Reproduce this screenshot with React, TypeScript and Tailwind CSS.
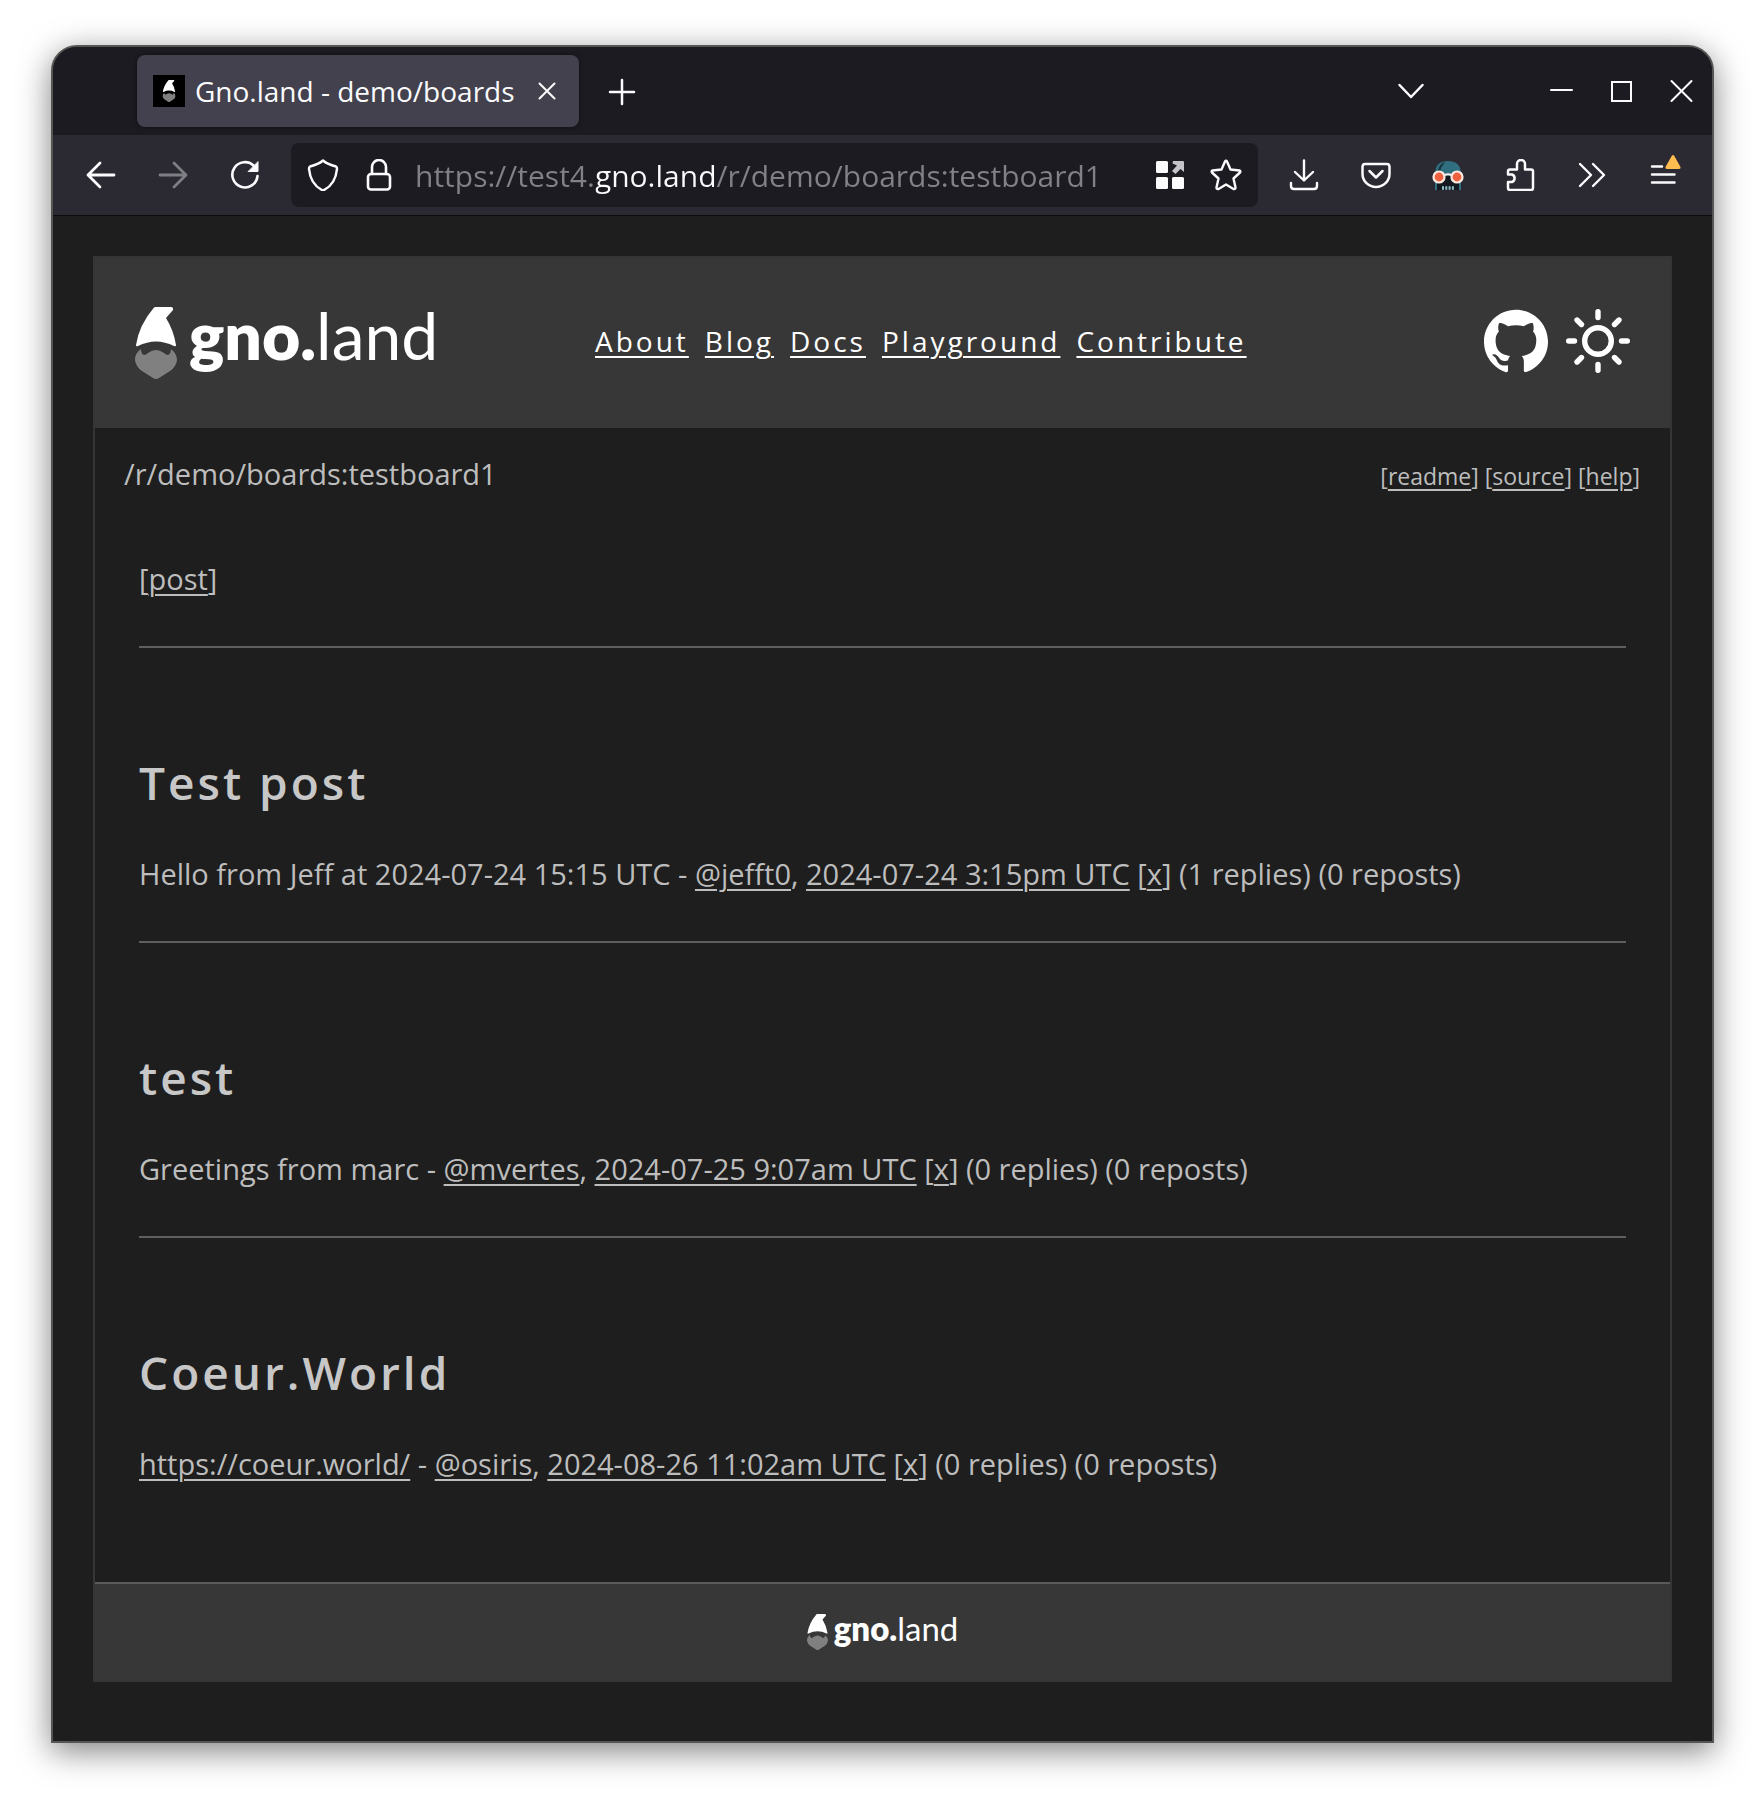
import React from "react";

type P = { className?: string };

const Gnome = ({ className = "" }: P) => (
  <svg viewBox="0 0 42 72" className={className} aria-hidden="true">
    <path d="M19 0.5Q19.5 0 20.500 0H36Q38.500 0 38 3L31 11Q38.500 23 41 38Q41 40 39 39Q21 30 3 39Q1 40 1 38Q4 18 19 0.500Z" fill="#fff" />
    <path d="M6 42C6 47 9 50 13 46Q21 40 29 46C33 50 36 47 36 42Q42 47 42 53Q41 60 35 64L24 71Q21 73 18 71L7 64Q1 60 0 53Q0 46 6 42Z" fill="#808080" />
  </svg>
);

const Stroke = ({ className = "", d, w = 2, box = "0 0 32 32", children }: P & { d?: string; w?: number; box?: string; children?: React.ReactNode }) => (
  <svg viewBox={box} className={className} fill="none" stroke="currentColor" strokeWidth={w} strokeLinecap="round" strokeLinejoin="round" aria-hidden="true">
    {d && <path d={d} />}
    {children}
  </svg>
);

const IconButton = ({ label, children, className = "" }: P & { label: string; children: React.ReactNode }) => (
  <button aria-label={label} className={`flex size-8 shrink-0 items-center justify-center ${className}`}>{children}</button>
);

const A = ({ children }: { children: React.ReactNode }) => (
  <a href="#" className="underline decoration-2 underline-offset-4">{children}</a>
);

function TabBar() {
  return (
    <div className="flex h-[88px] items-center bg-[#1c1b22] pl-[84px] pr-[15px] text-[#fbfbfe]">
      <div className="flex h-[72px] w-[442px] items-center rounded-lg bg-[#42414d] pl-4 pr-4 shadow-[0_0_4px_rgba(0,0,0,0.5)]">
        <span className="flex size-8 shrink-0 items-center justify-center bg-black"><Gnome className="h-[22px] w-[14px]" /></span>
        <span className="ml-[10px] grow whitespace-nowrap text-[28px]">Gno.land - demo/boards</span>
        <IconButton label="Close tab"><Stroke className="size-8" d="M8.500 8.500L23.500 23.500M23.500 8.500L8.500 23.500" /></IconButton>
      </div>
      <IconButton label="New tab" className="ml-[27px]"><Stroke className="size-8" w={2.5} d="M16 5V29M4 17H28" /></IconButton>
      <div className="grow" />
      <IconButton label="List all tabs"><Stroke className="size-8" w={2.5} d="M4.500 10L16 22L27.500 10" /></IconButton>
      <IconButton label="Minimize" className="ml-[118px]"><Stroke className="size-8" d="M6 15H27" /></IconButton>
      <IconButton label="Maximize" className="ml-7"><Stroke className="size-8"><rect x="7" y="7" width="19" height="19" rx="0" strokeLinejoin="miter" /></Stroke></IconButton>
      <IconButton label="Close window" className="ml-7"><Stroke className="size-8" d="M6.500 6L26.500 26M26.500 6L6.500 26" /></IconButton>
    </div>
  );
}

function Toolbar() {
  return (
    <div className="flex h-[81px] items-center border-b border-[#0c0c0d] bg-[#2b2a33] pl-8 pr-8 text-[#fbfbfe]">
      <IconButton label="Back"><Stroke className="size-8" w={2.8} d="M3 16H29M15 4L3 16L15 28" /></IconButton>
      <IconButton label="Forward" className="ml-10 text-[#7e7e85]"><Stroke className="size-8" w={2.8} d="M3 16H29M17 4L29 16L17 28" /></IconButton>
      <IconButton label="Reload" className="ml-10">
        <Stroke className="size-8" w={2.6}><path d="M28.500 17A12.600 12.600 0 1 1 25 7" /><path d="M29 3V12.500H19.500Z" fill="currentColor" strokeWidth="1" /></Stroke>
      </IconButton>
      <div className="ml-[30px] flex h-16 min-w-0 grow items-center rounded-lg bg-[#1c1b22] pl-4 pr-4">
        <IconButton label="Tracking protection"><Stroke className="size-8" w={2.5} d="M16 1.500C20 5 25 6.500 29 7.500Q30 8 30 10C29 20 25 27 17 31Q16 31.500 15 31C7 27 3 20 2 10Q2 8 3 7.500C7 6.500 12 5 16 1.500Z" /></IconButton>
        <IconButton label="Site security" className="ml-6"><Stroke className="size-8" w={2.6}><rect x="5" y="15" width="22" height="15.500" rx="3" /><path d="M9 15V8a7 7 0 0 1 14 0V15" /></Stroke></IconButton>
        <input
          type="text"
          aria-label="Address"
          defaultValue="https://test4.gno.land/r/demo/boards:testboard1"
          className="ml-5 min-w-0 grow bg-[linear-gradient(90deg,#828187_181px,#fbfbfe_181px,#fbfbfe_302px,#828187_302px)] bg-clip-text text-[30px] text-transparent caret-white outline-none"
        />
        <IconButton label="Apps">
          <svg viewBox="0 0 32 32" className="size-8" fill="currentColor" aria-hidden="true">
            <rect x="2" y="2" width="12" height="12" rx="1.500" /><rect x="2" y="18" width="12" height="12" rx="1.500" /><rect x="18" y="18" width="12" height="12" rx="1.500" />
            <path d="M19 2H29Q30 2 30 3V13L26.500 10L21.500 15L18 12L23 6.500L18.500 4.500Z" fill="#c4c4c8" />
          </svg>
        </IconButton>
        <IconButton label="Bookmark" className="ml-6"><Stroke className="size-8" w={2.4} d="M15 2.500Q16 1 17 2.500L20.500 10.500L29.500 11.500Q31 12 30 13.500L23.500 19.500L25.500 28.500Q25.500 30.500 23.500 30L16 25.500L8.500 30Q6.500 30.500 6.500 28.500L8.500 19.500L2 13.500Q1 12 2.500 11.500L11.500 10.500Z" /></IconButton>
      </div>
      <IconButton label="Downloads" className="ml-[30px]"><Stroke className="size-8" w={2.4} d="M16 1.500V21M7 13L16 21.500L25 13M3 24V27Q3 30 6 30H26Q29 30 29 27V24" /></IconButton>
      <IconButton label="Pocket" className="ml-10"><Stroke className="size-8" w={2.5} d="M5 5H27Q29.500 5 29.500 8V15A13.500 13 0 0 1 2.500 15V8Q2.500 5 5 5ZM9.500 12L16 18.500L22.500 12" /></IconButton>
      <IconButton label="Reader extension" className="ml-10">
        <svg viewBox="0 0 32 32" className="size-8" aria-hidden="true">
          <path d="M3 15C3 5 9 2 16 2S29 5 29 15V31H3Z" fill="#2f6f80" />
          <path d="M5 17H27V31H5Z" fill="#141a20" /><path d="M6 12Q7 5 13 3Q9 8 8 12Z" fill="#16323b" />
          <path d="M10 29h12" stroke="#8fc1cc" strokeWidth="3.500" strokeDasharray="2 1.300" />
          <circle cx="7" cy="18" r="5.500" fill="#f0613f" stroke="#ffe9e2" strokeWidth="2.200" /><circle cx="25" cy="18" r="5.500" fill="#f0613f" stroke="#ffe9e2" strokeWidth="2.200" />
          <path d="M12 16.500Q16 14 20 16.500" stroke="#ffe9e2" strokeWidth="2" fill="none" />
        </svg>
      </IconButton>
      <IconButton label="Extensions" className="ml-10"><Stroke className="size-8" w={2.5} d="M13 10.500V5a4 4 0 0 1 8 0V10.500H27Q29 10.500 29 12.500V29Q29 31 27 31H6Q4 31 4 29V23H8a4 4 0 0 0 0-7.500H4V12.500Q4 10.500 6 10.500Z" /></IconButton>
      <IconButton label="More tools" className="ml-10"><Stroke className="size-8" w={2.4} d="M4 5L15 16L4 27M17 5L28 16L17 27" /></IconButton>
      <IconButton label="Menu" className="ml-10">
        <svg viewBox="0 0 32 32" className="size-8 overflow-visible" aria-hidden="true">
          <path d="M4 7.500H14M4 15.500H26.500M4 23.500H26.500" stroke="currentColor" strokeWidth="2.500" strokeLinecap="round" />
          <path d="M24 -3.500Q25 -4.500 26 -3.500L32.500 8Q33 10 31 10H19Q17 10 17.500 8Z" fill="#ffbd4f" />
        </svg>
      </IconButton>
    </div>
  );
}

function Header() {
  return (
    <header className="flex h-[170px] items-center bg-[#373737] px-10 pb-1 text-white">
      <a href="#" aria-label="gno.land" className="flex w-[460px] items-center gap-3 pt-1">
        <Gnome className="h-[72px] w-[42px]" />
        <span className="pb-4 font-[Lato] text-[66px] leading-[72px]"><b className="font-extrabold">gno.</b>land</span>
      </a>
      <nav className="flex grow gap-4 whitespace-nowrap text-[28px] tracking-[3px]">
        {["About", "Blog", "Docs", "Playground", "Contribute"].map((t) => <A key={t}>{t}</A>)}
      </nav>
      <div className="flex items-center gap-[18px]">
        <a href="#" aria-label="GitHub">
          <svg viewBox="0 0 24 24" className="size-16" fill="currentColor" aria-hidden="true">
            <path d="M12 .297c-6.630 0-12 5.373-12 12 0 5.303 3.438 9.800 8.205 11.385.6.113.82-.258.82-.577 0-.285-.01-1.040-.015-2.040-3.338.724-4.042-1.610-4.042-1.610C4.422 18.070 3.633 17.700 3.633 17.700c-1.087-.744.084-.729.084-.729 1.205.084 1.838 1.236 1.838 1.236 1.070 1.835 2.809 1.305 3.495.998.108-.776.417-1.305.760-1.605-2.665-.3-5.466-1.332-5.466-5.930 0-1.310.465-2.380 1.235-3.220-.135-.303-.54-1.523.105-3.176 0 0 1.005-.322 3.300 1.230.96-.267 1.980-.399 3-.405 1.020.006 2.040.138 3 .405 2.280-1.552 3.285-1.230 3.285-1.230.645 1.653.24 2.873.12 3.176.765.840 1.230 1.910 1.230 3.220 0 4.610-2.805 5.625-5.475 5.920.42.36.81 1.096.81 2.220 0 1.606-.015 2.896-.015 3.286 0 .315.21.690.825.570C20.565 22.092 24 17.592 24 12.297c0-6.627-5.373-12-12-12" />
          </svg>
        </a>
        <button aria-label="Toggle theme">
          <Stroke className="size-16" box="0 0 64 64" w={5.4} d="M32 2.700V8.500M32 55.500V61.300M2.700 32H8.500M55.500 32H61.300M11 11L15.500 15.500M48.500 48.500L53 53M53 11L48.500 15.500M15.500 48.500L11 53"><circle cx="32" cy="32" r="13.300" /></Stroke>
        </button>
      </div>
    </header>
  );
}

type Post = { title: string; body: React.ReactNode; user: string; date: string; replies: number };
const posts: Post[] = [
  { title: "Test post", body: "Hello from Jeff at 2024-07-24 15:15 UTC", user: "@jefft0", date: "2024-07-24 3:15pm UTC", replies: 1 },
  { title: "test", body: "Greetings from marc", user: "@mvertes", date: "2024-07-25 9:07am UTC", replies: 0 },
  { title: "Coeur.World", body: <A>https://coeur.world/</A>, user: "@osiris", date: "2024-08-26 11:02am UTC", replies: 0 },
];

export default function App() {
  return (
    <div className="bg-white pb-[55px] pl-[51px] pr-[50px] pt-[45px] font-['Open_Sans',sans-serif]">
      <div className="overflow-hidden rounded-t-[26px] border-2 border-[#555554] bg-[#1e1e1e] shadow-[0_8px_32px_rgba(0,0,0,0.5)]">
        <TabBar />
        <Toolbar />
        <div className="px-10 pb-[59px] pt-10 text-[29px] leading-10 text-[#bdbdbd]">
          <div className="border-2 border-[#353535]">
            <Header />
            <main className="pb-[98px]">
              <div className="flex items-baseline justify-between pl-[29px] pr-[30px] pt-[26px]">
                <span>/r/demo/boards:testboard1</span>
                <span className="text-[23px]">[<A>readme</A>] [<A>source</A>] [<A>help</A>]</span>
              </div>
              <div className="px-11">
                <p className="mt-[63px]">[<A>post</A>]</p>
                {posts.map((p) => (
                  <article key={p.title}>
                    <hr className="mb-[102px] mt-[47px] border-t-2 border-[#5f5f5f]" />
                    <h2 className="text-[46px] font-semibold leading-[64px] tracking-[3px] text-[#c7c7c7]">{p.title}</h2>
                    <p className="mt-10">{p.body} - <A>{p.user}</A>, <A>{p.date}</A> [<A>x</A>] ({p.replies} replies) (0 reposts)</p>
                  </article>
                ))}
              </div>
            </main>
            <footer className="flex h-[98px] items-center justify-center border-t-2 border-[#5a5a5a] bg-[#373737] text-white">
              <a href="#" aria-label="gno.land" className="flex items-center gap-1.5">
                <Gnome className="h-9 w-[21px]" />
                <span className="pb-2 font-[Lato] text-[33px] leading-9"><b className="font-extrabold">gno.</b>land</span>
              </a>
            </footer>
          </div>
        </div>
      </div>
    </div>
  );
}
